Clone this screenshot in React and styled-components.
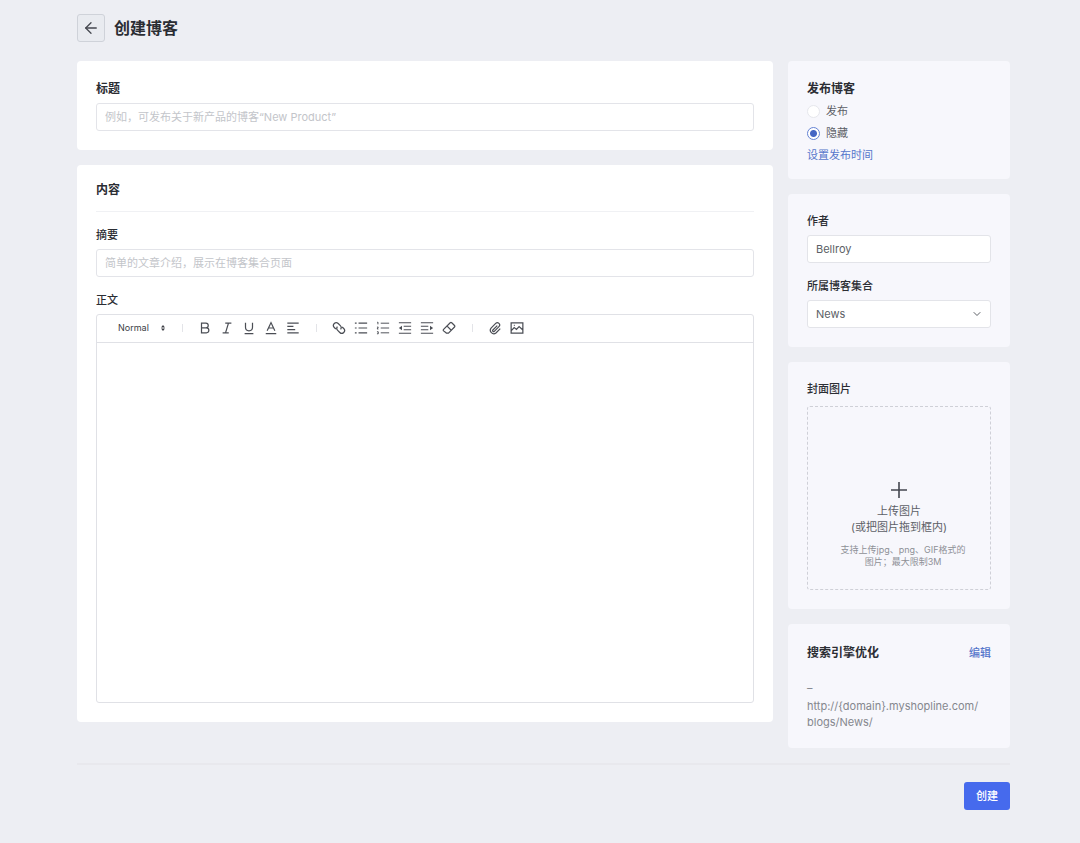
import React, { useState } from "react";
import styled, { createGlobalStyle } from "styled-components";
import { ArrowLeft, ChevronDown } from "lucide-react";

const GlobalStyle = createGlobalStyle`
  * {
    box-sizing: border-box;
  }
  body {
    margin: 0;
    min-height: 100vh;
    background: #edeef3;
    color: #2b2d33;
    font-family: Inter, "Noto Sans CJK SC", sans-serif;
    font-size: 11px;
    line-height: 16px;
  }
  button, input, select, textarea {
    font: inherit;
    color: inherit;
  }
`;

const Page = styled.div`
  padding: 14px 70px 32px 77px;
`;

const Header = styled.header`
  display: flex;
  align-items: center;
  gap: 9px;
  margin-bottom: 19px;
  h1 {
    margin: 0;
    font-size: 16px;
    line-height: 24px;
    font-weight: 600;
  }
`;

const BackButton = styled.button`
  display: flex;
  align-items: center;
  justify-content: center;
  width: 28px;
  height: 28px;
  padding: 0;
  border: 1px solid #cfd2d9;
  border-radius: 3px;
  background: #e9ebf0;
  color: #44474f;
`;

const Columns = styled.div`
  display: grid;
  grid-template-columns: minmax(0, 1fr) 222px;
  align-items: start;
  gap: 15px;
`;

const Column = styled.div`
  display: flex;
  flex-direction: column;
  gap: 15px;
`;

const Card = styled.section`
  padding: ${props => props.$top || 19}px 19px ${props => props.$bottom || 19}px;
  border-radius: 4px;
  background: ${props => (props.$side ? "#f7f7fc" : "#ffffff")};
`;

const CardTitle = styled.h2`
  margin: 0;
  font-size: 12px;
  line-height: 18px;
  font-weight: 600;
`;

const TitleLabel = styled.label`
  display: block;
  margin-bottom: 5px;
  font-size: 12px;
  line-height: 18px;
  font-weight: 600;
`;

const Label = styled.label`
  display: block;
  margin-bottom: 6px;
  font-weight: 500;
`;

const Divider = styled.hr`
  height: 1px;
  margin: 12px 0 15px;
  border: 0;
  background: #f0f1f4;
`;

const Field = styled.div`
  & + & {
    margin-top: 15px;
  }
`;

const TextInput = styled.input`
  display: block;
  width: 100%;
  height: 28px;
  padding: 0 8px;
  border: 1px solid #e3e4e9;
  border-radius: 3px;
  background: #fff;
  color: #5c5f66;
  &::placeholder {
    color: #c3c5ca;
    opacity: 1;
  }
`;

const SelectWrap = styled.div`
  display: grid;
  align-items: center;
  select, svg {
    grid-area: 1 / 1;
  }
  svg {
    justify-self: end;
    margin-right: 8px;
    pointer-events: none;
  }
`;

const Select = styled.select`
  appearance: none;
  width: 100%;
  height: 28px;
  padding: 0 8px;
  border: 1px solid #e3e4e9;
  border-radius: 3px;
  background: #fff;
  color: #5c5f66;
`;

const Editor = styled.div`
  border: 1px solid #e0e1e6;
  border-radius: 3px;
`;

const Toolbar = styled.div`
  display: flex;
  align-items: center;
  height: 28px;
  padding: 0 0 2px 21px;
  border-bottom: 1px solid #e0e1e6;
`;

const FormatWrap = styled(SelectWrap)`
  width: 52px;
  svg {
    margin-right: 5px;
  }
`;

const FormatSelect = styled.select`
  appearance: none;
  width: 100%;
  padding: 0;
  border: 0;
  background: transparent;
  font-size: 9px;
  color: #3c3e45;
`;

const Separator = styled.span`
  width: 1px;
  height: 8px;
  margin: 0 11px 0 12px;
  background: #e3e4e8;
`;

const ToolButton = styled.button`
  display: flex;
  align-items: center;
  justify-content: center;
  width: 22px;
  height: 22px;
  padding: 0;
  border: 0;
  background: transparent;
  color: #4b4e55;
`;

const EditorBody = styled.textarea`
  display: block;
  width: 100%;
  height: 359px;
  padding: 8px;
  border: 0;
  background: transparent;
  resize: none;
`;

const RadioGroup = styled.div`
  margin-top: 2px;
`;

const RadioRow = styled.label`
  display: flex;
  align-items: center;
  gap: 6px;
  height: 22px;
  color: #5c5f66;
`;

const Radio = styled.input`
  appearance: none;
  width: 13px;
  height: 13px;
  margin: 0;
  border: 1px solid #e6e7ec;
  border-radius: 50%;
  background: #fff;
  &:checked {
    border-color: #6583d4;
    background: radial-gradient(circle, #4566c4 3px, #fff 4px);
  }
`;

const TextLink = styled.a`
  color: #5676cb;
  text-decoration: none;
  font-weight: ${props => (props.$strong ? 500 : 400)};
`;

const ScheduleRow = styled.div`
  display: flex;
  align-items: center;
  height: 22px;
`;

const UploadTitle = styled.h2`
  margin: 0 0 9px;
  font-size: 11px;
  line-height: 16px;
  font-weight: 500;
`;

const UploadBox = styled.button`
  display: flex;
  flex-direction: column;
  align-items: center;
  justify-content: flex-end;
  width: 100%;
  aspect-ratio: 1;
  padding: 0 0 21px;
  border: 1px dashed #cfd0d7;
  border-radius: 3px;
  background: transparent;
  color: #5c5f66;
`;

const UploadText = styled.span`
  margin: 4px 0 9px;
`;

const UploadHint = styled.span`
  padding-left: 8px;
  font-size: 9px;
  line-height: 12px;
  color: #8e9097;
`;

const SeoHeader = styled.div`
  display: flex;
  align-items: center;
  justify-content: space-between;
  margin-bottom: 18px;
`;

const SeoText = styled.p`
  margin: 0 0 2px;
  color: #85878e;
`;

const Footer = styled.footer`
  display: flex;
  justify-content: flex-end;
  margin-top: 15px;
  padding-top: 17px;
  border-top: 2px solid #e8e8ed;
`;

const SubmitButton = styled.button`
  height: 28px;
  padding: 0 12px;
  border: 0;
  border-radius: 3px;
  background: #466aed;
  color: #fff;
  font-weight: 500;
`;

const icons = {
  bold: <path d="M4 2.5h5a2.7 2.7 0 0 1 0 5.4H4zM4 7.9h5.6a2.8 2.8 0 0 1 0 5.6H4z" />,
  italic: <path d="M6 2.5h7M3 13.5h7M9.7 2.5l-3.4 11" />,
  underline: <path d="M4 2v5.2a4 4 0 0 0 8 0V2M3 14.3h10" />,
  color: <path d="M3.6 11.2L8 1.8l4.4 9.4M5.2 8h5.6M2 14.3h12" />,
  align: <path d="M1.5 2.5h13M1.5 6.2h7M1.5 9.9h9M1.5 13.6h13" />,
  link: (
    <path d="M4.4 9.2L2.6 7.4a3.2 3.2 0 0 1 0-4.5 3.2 3.2 0 0 1 4.5 0l2.4 2.4a3.2 3.2 0 0 1 .3 4.2M11.6 6.8l1.8 1.8a3.2 3.2 0 0 1 0 4.5 3.2 3.2 0 0 1-4.5 0l-2.4-2.4a3.2 3.2 0 0 1-.3-4.2" />
  ),
  bullets: <path d="M5.2 2.5H15M5.2 8H15M5.2 13.5H15M1 2.5h2M1 8h2M1 13.5h2" />,
  numbers: (
    <path
      d="M5.4 2.5H15M5.4 8H15M5.4 13.5H15M1.4 1.6l.8-.4v2.6M1.1 7h1.5L1.3 9.1h1.5M1.1 12.3h1.5v2.3H1.1"
      strokeWidth="1.1"
    />
  ),
  outdent: (
    <>
      <path d="M1 2h14M6.5 6H15M6.5 10H15M1 14h14" />
      <path d="M4.6 5.4v5.2L1 8z" fill="currentColor" stroke="none" />
    </>
  ),
  indent: (
    <>
      <path d="M1 2h14M1 6h8.5M1 10h8.5M1 14h14" />
      <path d="M11.4 5.4v5.2L15 8z" fill="currentColor" stroke="none" />
    </>
  ),
  eraser: (
    <path
      d="M1.8 9.6l7.6-7.6a1.2 1.2 0 0 1 1.7 0l3.2 3.2a1.2 1.2 0 0 1 0 1.7l-6.6 6.6a1.2 1.2 0 0 1-.9.4H5.4a1.2 1.2 0 0 1-.8-.4l-2.8-2.2a1.2 1.2 0 0 1 0-1.7zM5.8 5.8l4.8 4.8"
    />
  ),
  attach: (
    <path d="M10.6 5.3l-5 5a1 1 0 0 0 1.6 1.5l5.3-5.4a2.6 2.6 0 0 0-3.7-3.7L3.5 8.1a4 4 0 0 0 5.6 5.6l4.9-5" />
  ),
  image: <path d="M1.3 2.2h13.4v11.6H1.3zM1.5 11l3.3-3.6 2.6 2.2 3-3.2 4 3.6M4.4 5h1" />
};

const Icon = ({ name }) => (
  <svg
    width="14"
    height="14"
    viewBox="0 0 16 16"
    fill="none"
    stroke="currentColor"
    strokeWidth="1.4"
    aria-hidden="true"
  >
    {icons[name]}
  </svg>
);

const toolGroups = [
  [["bold", "加粗"], ["italic", "斜体"], ["underline", "下划线"], ["color", "文字颜色"], ["align", "对齐"]],
  [
    ["link", "链接"],
    ["bullets", "无序列表"],
    ["numbers", "有序列表"],
    ["outdent", "减少缩进"],
    ["indent", "增加缩进"],
    ["eraser", "清除格式"]
  ],
  [["attach", "附件"], ["image", "图片"]]
];

const EditorToolbar = () => (
  <Toolbar>
    <FormatWrap>
      <FormatSelect aria-label="段落格式" defaultValue="Normal">
        <option>Normal</option>
      </FormatSelect>
      <svg width="4" height="6" viewBox="0 0 4 6" fill="#3c3e45">
        <path d="M2 0l2 2.4H0zM2 6l2-2.4H0z" />
      </svg>
    </FormatWrap>
    {toolGroups.map((group, i) => (
      <React.Fragment key={i}>
        <Separator />
        {group.map(([name, label]) => (
          <ToolButton key={name} type="button" aria-label={label}>
            <Icon name={name} />
          </ToolButton>
        ))}
      </React.Fragment>
    ))}
  </Toolbar>
);

const App = () => {
  const [status, setStatus] = useState("hidden");
  const [author, setAuthor] = useState("Bellroy");

  return (
    <Page>
      <GlobalStyle />
      <Header>
        <BackButton type="button" aria-label="返回">
          <ArrowLeft size={18} strokeWidth={1.75} />
        </BackButton>
        <h1>创建博客</h1>
      </Header>

      <Columns>
        <Column>
          <Card>
            <TitleLabel htmlFor="title">标题</TitleLabel>
            <TextInput id="title" placeholder="例如，可发布关于新产品的博客“New Product”" />
          </Card>

          <Card $top={16}>
            <CardTitle>内容</CardTitle>
            <Divider />
            <Field>
              <Label htmlFor="summary">摘要</Label>
              <TextInput id="summary" placeholder="简单的文章介绍，展示在博客集合页面" />
            </Field>
            <Field>
              <Label htmlFor="body">正文</Label>
              <Editor>
                <EditorToolbar />
                <EditorBody id="body" />
              </Editor>
            </Field>
          </Card>
        </Column>

        <Column>
          <Card $side $bottom={13}>
            <CardTitle>发布博客</CardTitle>
            <RadioGroup>
              <RadioRow>
                <Radio
                  type="radio"
                  name="status"
                  checked={status === "published"}
                  onChange={() => setStatus("published")}
                />
                发布
              </RadioRow>
              <RadioRow>
                <Radio
                  type="radio"
                  name="status"
                  checked={status === "hidden"}
                  onChange={() => setStatus("hidden")}
                />
                隐藏
              </RadioRow>
            </RadioGroup>
            <ScheduleRow>
              <TextLink href="#schedule">设置发布时间</TextLink>
            </ScheduleRow>
          </Card>

          <Card $side>
            <Field>
              <Label htmlFor="author">作者</Label>
              <TextInput id="author" value={author} onChange={e => setAuthor(e.target.value)} />
            </Field>
            <Field>
              <Label htmlFor="collection">所属博客集合</Label>
              <SelectWrap>
                <Select id="collection" defaultValue="News">
                  <option>News</option>
                </Select>
                <ChevronDown size={12} color="#5c5f66" />
              </SelectWrap>
            </Field>
          </Card>

          <Card $side>
            <UploadTitle>封面图片</UploadTitle>
            <UploadBox type="button">
              <svg width="18" height="18" viewBox="0 0 18 18" stroke="#44474f" strokeWidth="1.6">
                <path d="M9 1v16M1 9h16" />
              </svg>
              <UploadText>
                上传图片
                <br />
                (或把图片拖到框内)
              </UploadText>
              <UploadHint>
                支持上传jpg、png、GIF格式的
                <br />
                图片；最大限制3M
              </UploadHint>
            </UploadBox>
          </Card>

          <Card $side $top={20} $bottom={16}>
            <SeoHeader>
              <CardTitle>搜索引擎优化</CardTitle>
              <TextLink href="#seo" $strong>
                编辑
              </TextLink>
            </SeoHeader>
            <SeoText>–</SeoText>
            <SeoText>
              {"http://{domain}.myshopline.com/"}
              <wbr />
              blogs/News/
            </SeoText>
          </Card>
        </Column>
      </Columns>

      <Footer>
        <SubmitButton type="submit">创建</SubmitButton>
      </Footer>
    </Page>
  );
};

export default App;
